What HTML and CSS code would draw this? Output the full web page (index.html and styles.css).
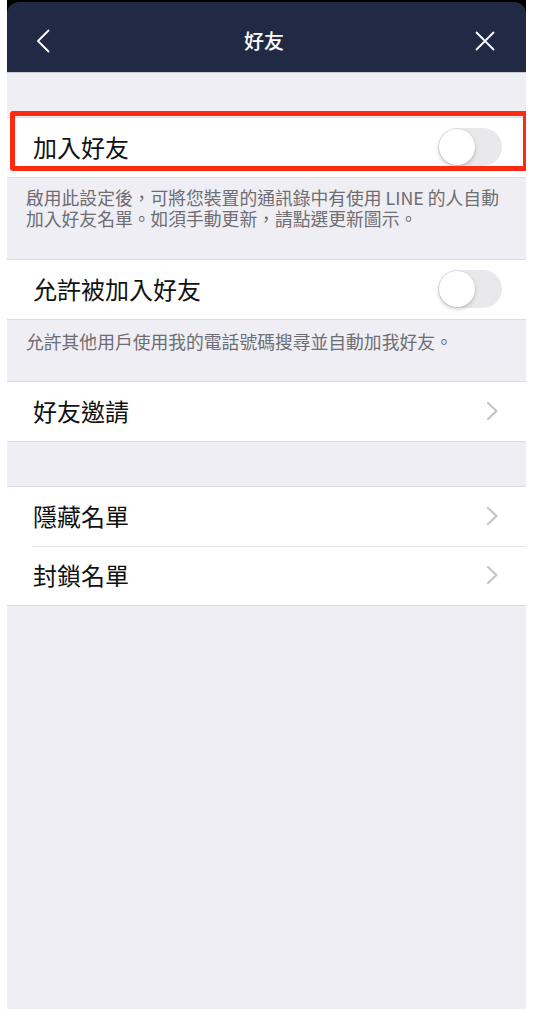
FILE: index.html
```html
<!DOCTYPE html>
<html lang="zh-Hant">
<head>
<meta charset="utf-8">
<title>好友</title>
<link rel="stylesheet" href="styles.css">
</head>
<body>
<div class="screen">
  <div class="top">
    <header class="nav">
      <span class="nav-btn back">
        <svg width="14" height="24" viewBox="0 0 14 24"><path d="M12.5 1.5 L2 12 L12.5 22.5" fill="none" stroke="#fff" stroke-width="1.8" stroke-linecap="round" stroke-linejoin="round"/></svg>
      </span>
      <h1 class="nav-title">好友</h1>
      <span class="nav-btn close">
        <svg width="20" height="20" viewBox="0 0 20 20"><path d="M1.5 1.5 L18.5 18.5 M18.5 1.5 L1.5 18.5" fill="none" stroke="#fff" stroke-width="1.8" stroke-linecap="round"/></svg>
      </span>
    </header>
  </div>

  <div class="spacer spacer-top"></div>

  <section class="group">
    <div class="row row-highlight">
      <span class="label">加入好友</span>
      <span class="toggle"><span class="knob"></span></span>
      <span class="highlight"></span>
    </div>
  </section>
  <p class="note note-two">啟用此設定後，可將您裝置的通訊錄中有使用 LINE 的人自動加入好友名單。如須手動更新，請點選更新圖示。</p>

  <section class="group">
    <div class="row">
      <span class="label">允許被加入好友</span>
      <span class="toggle"><span class="knob"></span></span>
    </div>
  </section>
  <p class="note note-one">允許其他用戶使用我的電話號碼搜尋並自動加我好友。</p>

  <section class="group">
    <div class="row">
      <span class="label">好友邀請</span>
      <span class="chev"><svg width="13" height="20" viewBox="0 0 13 20"><path d="M2 2 L10.5 10 L2 18" fill="none" stroke="#c5c5c9" stroke-width="2.2" stroke-linecap="round" stroke-linejoin="round"/></svg></span>
    </div>
  </section>

  <div class="spacer spacer-mid"></div>

  <section class="group">
    <div class="row">
      <span class="label">隱藏名單</span>
      <span class="chev"><svg width="13" height="20" viewBox="0 0 13 20"><path d="M2 2 L10.5 10 L2 18" fill="none" stroke="#c5c5c9" stroke-width="2.2" stroke-linecap="round" stroke-linejoin="round"/></svg></span>
    </div>
    <div class="row row-sep">
      <span class="label">封鎖名單</span>
      <span class="chev"><svg width="13" height="20" viewBox="0 0 13 20"><path d="M2 2 L10.5 10 L2 18" fill="none" stroke="#c5c5c9" stroke-width="2.2" stroke-linecap="round" stroke-linejoin="round"/></svg></span>
    </div>
  </section>
</div>
</body>
</html>
```

FILE: styles.css
```css
* { box-sizing: border-box; }

html, body {
  margin: 0;
  padding: 0;
  background: #ffffff;
}

body {
  font-family: "Noto Sans CJK TC", "Noto Sans", sans-serif;
}

.screen {
  margin-left: 7px;
  width: 519px;
  height: 1009px;
  background: #efeef4;
  overflow: hidden;
}

.top {
  background: #000;
  padding-top: 2px;
}

.nav {
  height: 71px;
  background: #212a45;
  border-radius: 12px 12px 0 0;
  border-bottom: 1px solid #c9c9d6;
  display: flex;
  align-items: center;
  justify-content: space-between;
  padding: 8px 31px 0 26px;
}

.nav-title {
  margin: 0;
  font-size: 20px;
  font-weight: 500;
  color: #ffffff;
  line-height: 1;
}

.nav-btn {
  width: 20px;
  height: 24px;
  display: flex;
  align-items: center;
  justify-content: center;
}

.spacer-top { height: 44px; }
.spacer-mid { height: 44px; }

.group {
  background: #ffffff;
  border-top: 1px solid #dcdce0;
  border-bottom: 1px solid #dcdce0;
}

.row {
  position: relative;
  height: 59px;
  display: flex;
  align-items: center;
  justify-content: space-between;
  padding: 0 24px 2px 26px;
}

.row-sep::before {
  content: "";
  position: absolute;
  left: 25px;
  right: 0;
  top: 0;
  border-top: 1px solid #e3e3e6;
}

.label {
  font-size: 24px;
  color: #111111;
  line-height: 1;
}

.chev {
  display: flex;
  padding-right: 3px;
}

.toggle {
  position: relative;
  width: 64px;
  height: 38px;
  border-radius: 19px;
  background: #e9e9eb;
}

.knob {
  position: absolute;
  left: 1px;
  top: 1px;
  width: 36px;
  height: 36px;
  border-radius: 50%;
  background: #ffffff;
  box-shadow: 0 2px 4px rgba(0, 0, 0, 0.2), 0 0 0 0.5px rgba(0, 0, 0, 0.06);
}

.highlight {
  position: absolute;
  left: 3px;
  right: -2px;
  top: -7px;
  bottom: 6px;
  border: 5px solid #ff2a12;
  border-radius: 3px;
  pointer-events: none;
}

.note {
  margin: 0;
  font-size: 17.8px;
  line-height: 21px;
  color: #6d6d72;
  padding: 0 18px 0 19px;
}

.note-two {
  padding-top: 9px;
  padding-bottom: 30px;
}

.note-one {
  padding-top: 11px;
  padding-bottom: 29px;
}
```
